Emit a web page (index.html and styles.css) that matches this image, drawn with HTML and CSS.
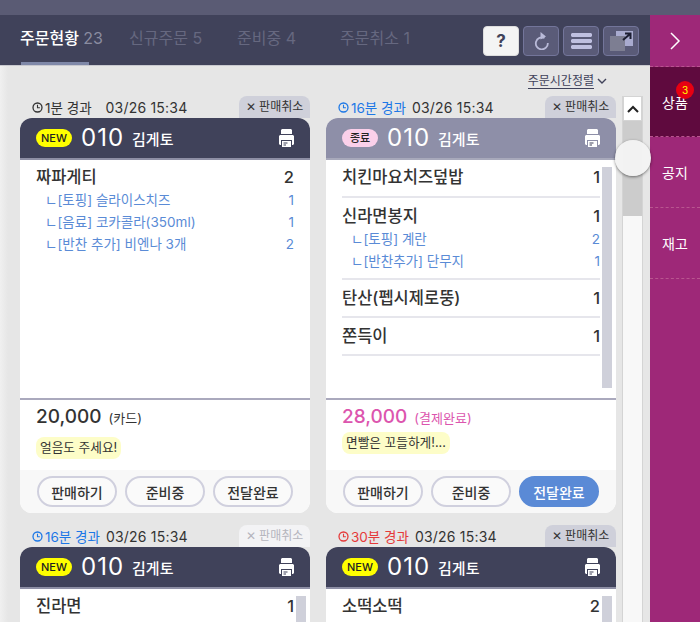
FILE: index.html
```html
<!DOCTYPE html>
<html lang="ko">
<head>
    <meta charset="UTF-8">
    <title>주문현황</title>
    <link rel="stylesheet" href="styles.css">
</head>
<body>
    <svg class="defs" width="0" height="0">
        <symbol id="printer" viewBox="0 0 15 18">
            <path d="M3 0h9l1 1v4H2V1z" fill="#fff"/>
            <path d="M1 6h13l1 1v8l-1 1h-1v-5H2v5H1l-1-1V7z" fill="#fff"/>
            <path d="M3 12h9v6H3z" fill="#fff"/>
            <path d="M4.500 13.500h4v1h-4zM4.500 15.500h2.500v1h-2.500z" fill="#40425a"/>
        </symbol>
        <symbol id="clock" viewBox="0 0 11 11">
            <circle cx="5.500" cy="5.500" r="4.500" fill="none" stroke="currentColor" stroke-width="1.300"/>
            <path d="M5.500 2.800v3h2.400" fill="none" stroke="currentColor" stroke-width="1.100"/>
        </symbol>
    </svg>

    <div class="top-strip"></div>
    <div class="app">
        <div class="main">
            <header class="header">
                <nav class="tabs">
                    <a class="tab tab-on">주문현황 <span class="tab-count">23</span></a>
                    <a class="tab">신규주문 5</a>
                    <a class="tab">준비중 4</a>
                    <a class="tab">주문취소 1</a>
                </nav>
                <div class="tools">
                    <button class="tool tool-help">?</button>
                    <button class="tool">
                        <svg width="15" height="18" viewBox="0 0 15 18"><path d="M10.500 6A6 6 0 1 0 13.800 11" fill="none" stroke="#b9bad8" stroke-width="1.800"/><path d="M6.500 0l5.500 4.500-5.500 3z" fill="#b9bad8"/></svg>
                    </button>
                    <button class="tool">
                        <svg width="21" height="16" viewBox="0 0 21 16"><path d="M1 0h19l1 1v2l-1 1H1L0 3V1zM1 6h19l1 1v2l-1 1H1L0 9V7zM1 12h19l1 1v2l-1 1H1l-1-1v-2z" fill="#bfc0e0"/></svg>
                    </button>
                    <button class="tool">
                        <svg width="23" height="20" viewBox="0 0 23 20"><path d="M6 0h17v15H6z" fill="#a9abcf"/><path d="M0 5h15v15H0z" fill="#7d7e92"/><path d="M13 9l7-6M15 2.500h5.500V8" fill="none" stroke="#1d1e33" stroke-width="2"/></svg>
                    </button>
                </div>
            </header>

            <div class="content">
                <div class="orders">
                    <div class="sort-row">
                        <a class="sort">주문시간정렬</a>
                        <svg width="10" height="6" viewBox="0 0 10 6"><path d="M1 1l4 4 4-4" fill="none" stroke="#40425a" stroke-width="1.400"/></svg>
                    </div>
                    <div class="order-grid">

                        <div class="order">
                            <div class="order-meta">
                                <span class="elapsed"><svg class="clock"><use href="#clock"/></svg>1분 경과</span>
                                <span class="time time-wide">03/26 15:34</span>
                                <span class="cancel">✕ 판매취소</span>
                            </div>
                            <div class="card">
                                <div class="card-head">
                                    <span class="badge">NEW</span>
                                    <span class="phone">010</span>
                                    <span class="buyer">김게토</span>
                                    <svg class="print"><use href="#printer"/></svg>
                                </div>
                                <div class="card-body">
                                    <div class="items">
                                        <div class="item item-plain">
                                            <div class="item-row"><span>짜파게티</span><span>2</span></div>
                                            <div class="option"><span>ㄴ[토핑] 슬라이스치즈</span><span>1</span></div>
                                            <div class="option"><span>ㄴ[음료] 코카콜라(350ml)</span><span>1</span></div>
                                            <div class="option"><span>ㄴ[반찬 추가] 비엔나 3개</span><span>2</span></div>
                                        </div>
                                    </div>
                                </div>
                                <div class="card-foot">
                                    <div class="price">20,000 <small>(카드)</small></div>
                                    <span class="note">얼음도 주세요!</span>
                                </div>
                                <div class="actions">
                                    <button class="action">판매하기</button>
                                    <button class="action">준비중</button>
                                    <button class="action">전달완료</button>
                                </div>
                            </div>
                        </div>

                        <div class="order">
                            <div class="order-meta">
                                <span class="elapsed elapsed-blue"><svg class="clock"><use href="#clock"/></svg>16분 경과</span>
                                <span class="time">03/26 15:34</span>
                                <span class="cancel">✕ 판매취소</span>
                            </div>
                            <div class="card">
                                <div class="card-head card-head-done">
                                    <span class="badge badge-done">종료</span>
                                    <span class="phone">010</span>
                                    <span class="buyer">김게토</span>
                                    <svg class="print"><use href="#printer"/></svg>
                                </div>
                                <div class="card-body">
                                    <div class="items">
                                        <div class="item">
                                            <div class="item-row"><span>치킨마요치즈덮밥</span><span>1</span></div>
                                        </div>
                                        <div class="item">
                                            <div class="item-row"><span>신라면봉지</span><span>1</span></div>
                                            <div class="option"><span>ㄴ[토핑] 계란</span><span>2</span></div>
                                            <div class="option"><span>ㄴ[반찬추가] 단무지</span><span>1</span></div>
                                        </div>
                                        <div class="item">
                                            <div class="item-row"><span>탄산(펩시제로뚱)</span><span>1</span></div>
                                        </div>
                                        <div class="item">
                                            <div class="item-row"><span>쫀득이</span><span>1</span></div>
                                        </div>
                                    </div>
                                    <div class="inner-bar"></div>
                                </div>
                                <div class="card-foot">
                                    <div class="price price-paid">28,000 <small>(결제완료)</small></div>
                                    <span class="note note-tight">면빨은 꼬들하게!...</span>
                                </div>
                                <div class="actions">
                                    <button class="action">판매하기</button>
                                    <button class="action">준비중</button>
                                    <button class="action action-on">전달완료</button>
                                </div>
                            </div>
                        </div>

                        <div class="order">
                            <div class="order-meta">
                                <span class="elapsed elapsed-blue"><svg class="clock"><use href="#clock"/></svg>16분 경과</span>
                                <span class="time">03/26 15:34</span>
                                <span class="cancel cancel-off">✕ 판매취소</span>
                            </div>
                            <div class="card">
                                <div class="card-head">
                                    <span class="badge">NEW</span>
                                    <span class="phone">010</span>
                                    <span class="buyer">김게토</span>
                                    <svg class="print"><use href="#printer"/></svg>
                                </div>
                                <div class="card-body">
                                    <div class="items">
                                        <div class="item">
                                            <div class="item-row"><span>진라면</span><span>1</span></div>
                                        </div>
                                    </div>
                                    <div class="inner-bar"></div>
                                </div>
                            </div>
                        </div>

                        <div class="order">
                            <div class="order-meta">
                                <span class="elapsed elapsed-red"><svg class="clock"><use href="#clock"/></svg>30분 경과</span>
                                <span class="time">03/26 15:34</span>
                                <span class="cancel">✕ 판매취소</span>
                            </div>
                            <div class="card">
                                <div class="card-head">
                                    <span class="badge">NEW</span>
                                    <span class="phone">010</span>
                                    <span class="buyer">김게토</span>
                                    <svg class="print"><use href="#printer"/></svg>
                                </div>
                                <div class="card-body">
                                    <div class="items">
                                        <div class="item">
                                            <div class="item-row"><span>소떡소떡</span><span>2</span></div>
                                        </div>
                                    </div>
                                    <div class="inner-bar"></div>
                                </div>
                            </div>
                        </div>

                    </div>
                </div>

                <div class="scrollbar">
                    <div class="scroll-up">
                        <svg width="12" height="8" viewBox="0 0 12 8"><path d="M1 7l5-5 5 5" fill="none" stroke="#222" stroke-width="2"/></svg>
                    </div>
                    <div class="scroll-thumb"></div>
                </div>
                <div class="scroll-knob"></div>
            </div>
        </div>

        <aside class="side">
            <button class="side-open">
                <svg width="11" height="18" viewBox="0 0 11 18"><path d="M1 1l8 8-8 8" fill="none" stroke="#fff" stroke-width="1.500"/></svg>
            </button>
            <a class="side-item side-item-on">상품<span class="side-badge">3</span></a>
            <a class="side-item">공지</a>
            <a class="side-item">재고</a>
        </aside>
    </div>
</body>
</html>
```

FILE: styles.css
```css
* { box-sizing: border-box; }
html, body { margin: 0; height: 622px; overflow: hidden; }
body { font-family: Inter, "Noto Sans CJK KR", sans-serif; color: #333; background: #e6e6e6; }
button { font-family: inherit; cursor: pointer; }
.defs { position: absolute; }

.top-strip { height: 15px; background: #5a5b74; }
.app { display: flex; height: 607px; }
.main { width: 650px; display: flex; flex-direction: column; position: relative; }

/* header */
.header { height: 51px; flex: none; display: flex; justify-content: space-between; padding: 0 11px 0 20px; background: #40425a; border-bottom: 1px solid #c9c9cf; }
.tabs { display: grid; grid-template-columns: 109px 108px 103px auto; }
.tab { position: relative; font-size: 16px; line-height: 46px; color: #666880; white-space: nowrap; }
.tab-on { color: #fff; font-weight: 500; }
.tab-on::after { content: ""; position: absolute; left: 1px; bottom: 0; width: 68px; height: 3px; background: #7f88a8; }
.tab-count { color: #8a8ca0; font-weight: 400; }
.tools { display: flex; gap: 4px; padding-top: 11px; }
.tool { width: 36px; height: 30px; padding: 0; display: flex; align-items: center; justify-content: center; background: #5a5b78; border: 1px solid #73759a; border-radius: 4px; }
.tool-help { background: #f4f4f4; border-color: #ddd; font-size: 17px; font-weight: 700; color: #40425a; }

/* order list */
.content { flex: 1; display: flex; min-height: 0; position: relative; background: linear-gradient(90deg, #f0f0f0, #e6e6e6 8px); }
.orders { width: 622px; padding-left: 20px; }
.sort-row { height: 30px; display: flex; justify-content: flex-end; align-items: center; gap: 3px; padding: 0 15px 0 0; }
.sort { font-size: 12px; line-height: 15px; border-bottom: 1px solid #40425a; color: #40425a; }
.order-grid { display: grid; grid-template-columns: 290px 290px; gap: 12px 16px; }

.order-meta { height: 22px; display: flex; align-items: center; font-size: 13.5px; position: relative; padding-left: 12px; }
.elapsed { display: flex; align-items: center; gap: 2px; margin-right: 5px; }
.elapsed-blue { color: #1d78e6; }
.elapsed-red { color: #e53a3a; }
.time { font-size: 14px; letter-spacing: 0.2px; margin-left: 1px; }
.time-wide { margin-left: 9px; }
.clock { width: 11px; height: 11px; }
.cancel { margin-left: auto; width: 71px; height: 22px; line-height: 21px; text-align: center; font-size: 12px; background: #cfd0da; border-radius: 8px 8px 0 0; white-space: nowrap; }
.cancel-off { background: #f3f3f5; color: #b5b5bd; }

.card { background: #fff; border-radius: 12px; overflow: hidden; }
.card-head { height: 42px; display: flex; align-items: center; padding: 0 16px; background: #40425a; border-bottom: 2px solid #8e8fa5; color: #fff; }
.card-head-done { background: #8e8fa8; border-bottom-color: #a8a9bb; }
.badge { width: 36px; height: 18px; border-radius: 9px; background: #ff0; color: #222; font-size: 11px; font-weight: 500; line-height: 18px; text-align: center; }
.badge-done { background: #fbd0ea; }
.phone { font-size: 24px; line-height: 40px; margin-left: 9px; letter-spacing: 1px; }
.buyer { font-size: 15px; font-weight: 500; margin-left: 8px; }
.print { width: 15px; height: 18px; margin-left: auto; }

.card-body { height: 238px; display: flex; padding-right: 4px; }
.items { flex: 1; padding-left: 16px; min-width: 0; }
.item { padding: 6px 0; border-bottom: 2px solid #e6e6ec; }
.item:first-child { padding-top: 5px; padding-bottom: 7px; }
.item-plain { border-bottom: 0; padding-right: 12px; }
.item-row { display: flex; justify-content: space-between; font-size: 16.5px; font-weight: 500; line-height: 24px; }
.option { display: flex; justify-content: space-between; font-size: 13.5px; line-height: 22px; padding-left: 9px; color: #5a8bd6; }
.inner-bar { width: 10px; height: 221px; margin: 7px 0 0 2px; background: #cfd0da; }

.card-foot { height: 72px; padding: 3px 16px 0; border-top: 2px solid #aaa9bd; }
.price { font-size: 19px; font-weight: 500; line-height: 27px; }
.price small { font-size: 13px; font-weight: 400; margin-left: 2px; }
.price-paid { color: #dc55ae; }
.note { display: block; width: fit-content; height: 22px; margin-top: 5px; padding: 0 4px; font-size: 12.7px; line-height: 21px; background: #fdfdc8; border-radius: 8px; }
.note-tight { margin-top: 0; }

.actions { height: 43px; display: flex; gap: 8px; padding: 6px 17px 0; background: #f8f8f8; }
.action { width: 80px; height: 31px; padding: 0; font-size: 14px; font-weight: 500; color: #333; background: #fafafa; border: 2px solid #d0d0de; border-radius: 16px; }
.action-on { background: #5a8ad6; border-color: #5a8ad6; color: #fff; }

/* scrollbar */
.scrollbar { width: 21px; margin-top: 30px; display: flex; flex-direction: column; background: #f8f8f8; border: solid #d4d4d4; border-width: 0 1px; }
.scroll-up { height: 25px; display: flex; align-items: center; justify-content: center; background: #fff; border: 1px solid #d4d4d4; }
.scroll-thumb { height: 95px; background: #ccc; }
.scroll-knob { position: absolute; left: 615px; top: 74px; width: 36px; height: 36px; border-radius: 50%; background: rgba(244, 244, 244, 0.96); box-shadow: 0 1px 3px rgba(0, 0, 0, 0.5); }

/* side menu */
.side { width: 50px; background: #9e2878; color: #fff; }
.side-open { width: 50px; height: 52px; display: flex; align-items: center; justify-content: center; padding: 0; background: none; border: 0; border-bottom: 1px dashed #b9558f; }
.side-item { display: block; position: relative; height: 71px; line-height: 71px; font-size: 14px; text-align: center; border-bottom: 1px dashed #b9558f; }
.side-item-on { height: 70px; background: #5f0a3e; }
.side-badge { position: absolute; left: 26px; top: 14px; width: 18px; height: 18px; border-radius: 50%; background: #e60012; color: #ff0; font-size: 10px; line-height: 18px; }
```
